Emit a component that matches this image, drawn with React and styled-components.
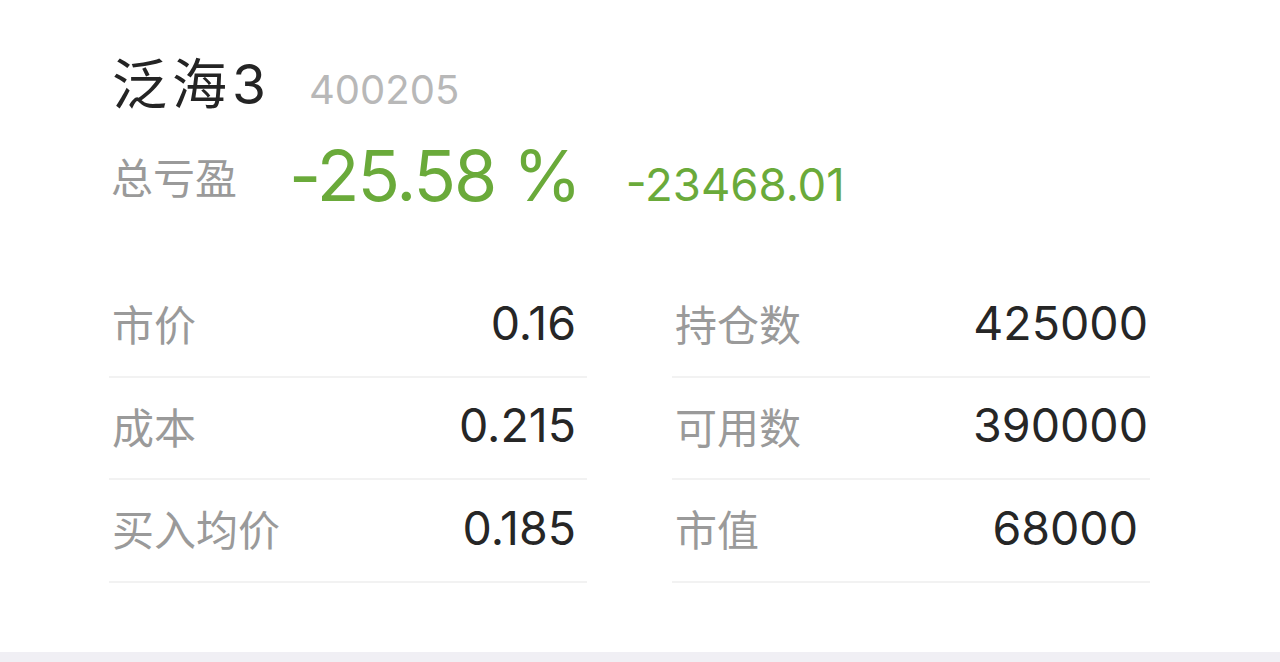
import React from "react";
import styled, { createGlobalStyle } from "styled-components";

const Global = createGlobalStyle`
  html, body {
    margin: 0;
    padding: 0;
    background: #ffffff;
  }
  body {
    font-family: "Inter", "Noto Sans CJK SC", sans-serif;
  }
`;

const Page = styled.div`
  width: 1280px;
  height: 662px;
  display: flex;
  flex-direction: column;
  background: #ffffff;
  overflow: hidden;
`;

const Card = styled.div`
  flex: 1;
  padding: 44px 130px 0 109px;
  display: flex;
  flex-direction: column;
`;

const TitleRow = styled.div`
  display: flex;
  align-items: baseline;
  padding-left: 3px;
`;

const Name = styled.div`
  font-size: 55px;
  line-height: 80px;
  color: #242424;
  letter-spacing: 5px;
  margin-right: 38px;
`;

const Code = styled.div`
  font-size: 40px;
  color: #b8b8b8;
`;

const PnlRow = styled.div`
  padding-left: 2px;
  margin-top: 9px;
  line-height: 86px;
  white-space: nowrap;
`;

const PnlLabel = styled.span`
  font-size: 42px;
  color: #9a9a9a;
  margin-right: 52px;
`;

const Green = styled.span`
  color: #6aaa3a;
  font-size: ${({ size }) => size}px;
  margin-right: ${({ gap }) => gap || 0}px;
  letter-spacing: ${({ spacing }) => spacing || 0}px;
  vertical-align: ${({ drop }) => -drop}px;
`;

const Grid = styled.div`
  display: grid;
  grid-template-columns: 478px 478px;
  column-gap: 85px;
  margin-top: 44px;
`;

const Column = styled.div`
  display: flex;
  flex-direction: column;
`;

const Row = styled.div`
  box-sizing: border-box;
  height: 102.5px;
  display: flex;
  align-items: center;
  justify-content: space-between;
  border-bottom: 2px solid #f2f2f2;
  padding: 0 ${({ pr }) => pr}px 5px 3px;
`;

const Label = styled.span`
  font-size: 42px;
  color: #9a9a9a;
`;

const Value = styled.span`
  font-size: 46.5px;
  color: #262626;
  padding-right: ${({ shift }) => shift || 0}px;
`;

const Footer = styled.div`
  height: 10px;
  background: #f0eff4;
`;

const left = [
  ["市价", "0.16"],
  ["成本", "0.215"],
  ["买入均价", "0.185"],
];

const right = [
  ["持仓数", "425000"],
  ["可用数", "390000"],
  ["市值", "68000", 10],
];

export default function App() {
  return (
    <Page>
      <Global />
      <Card>
        <TitleRow>
          <Name>泛海3</Name>
          <Code>400205</Code>
        </TitleRow>
        <PnlRow>
          <PnlLabel>总亏盈</PnlLabel>
          <Green size={70} gap={46} spacing={-2} drop={7}>-25.58 %</Green>
          <Green size={45.5} drop={7}>-23468.01</Green>
        </PnlRow>
        <Grid>
          <Column>
            {left.map(([k, v]) => (
              <Row key={k} pr={11}>
                <Label>{k}</Label>
                <Value>{v}</Value>
              </Row>
            ))}
          </Column>
          <Column>
            {right.map(([k, v, s]) => (
              <Row key={k} pr={2}>
                <Label>{k}</Label>
                <Value shift={s}>{v}</Value>
              </Row>
            ))}
          </Column>
        </Grid>
      </Card>
      <Footer />
    </Page>
  );
}
